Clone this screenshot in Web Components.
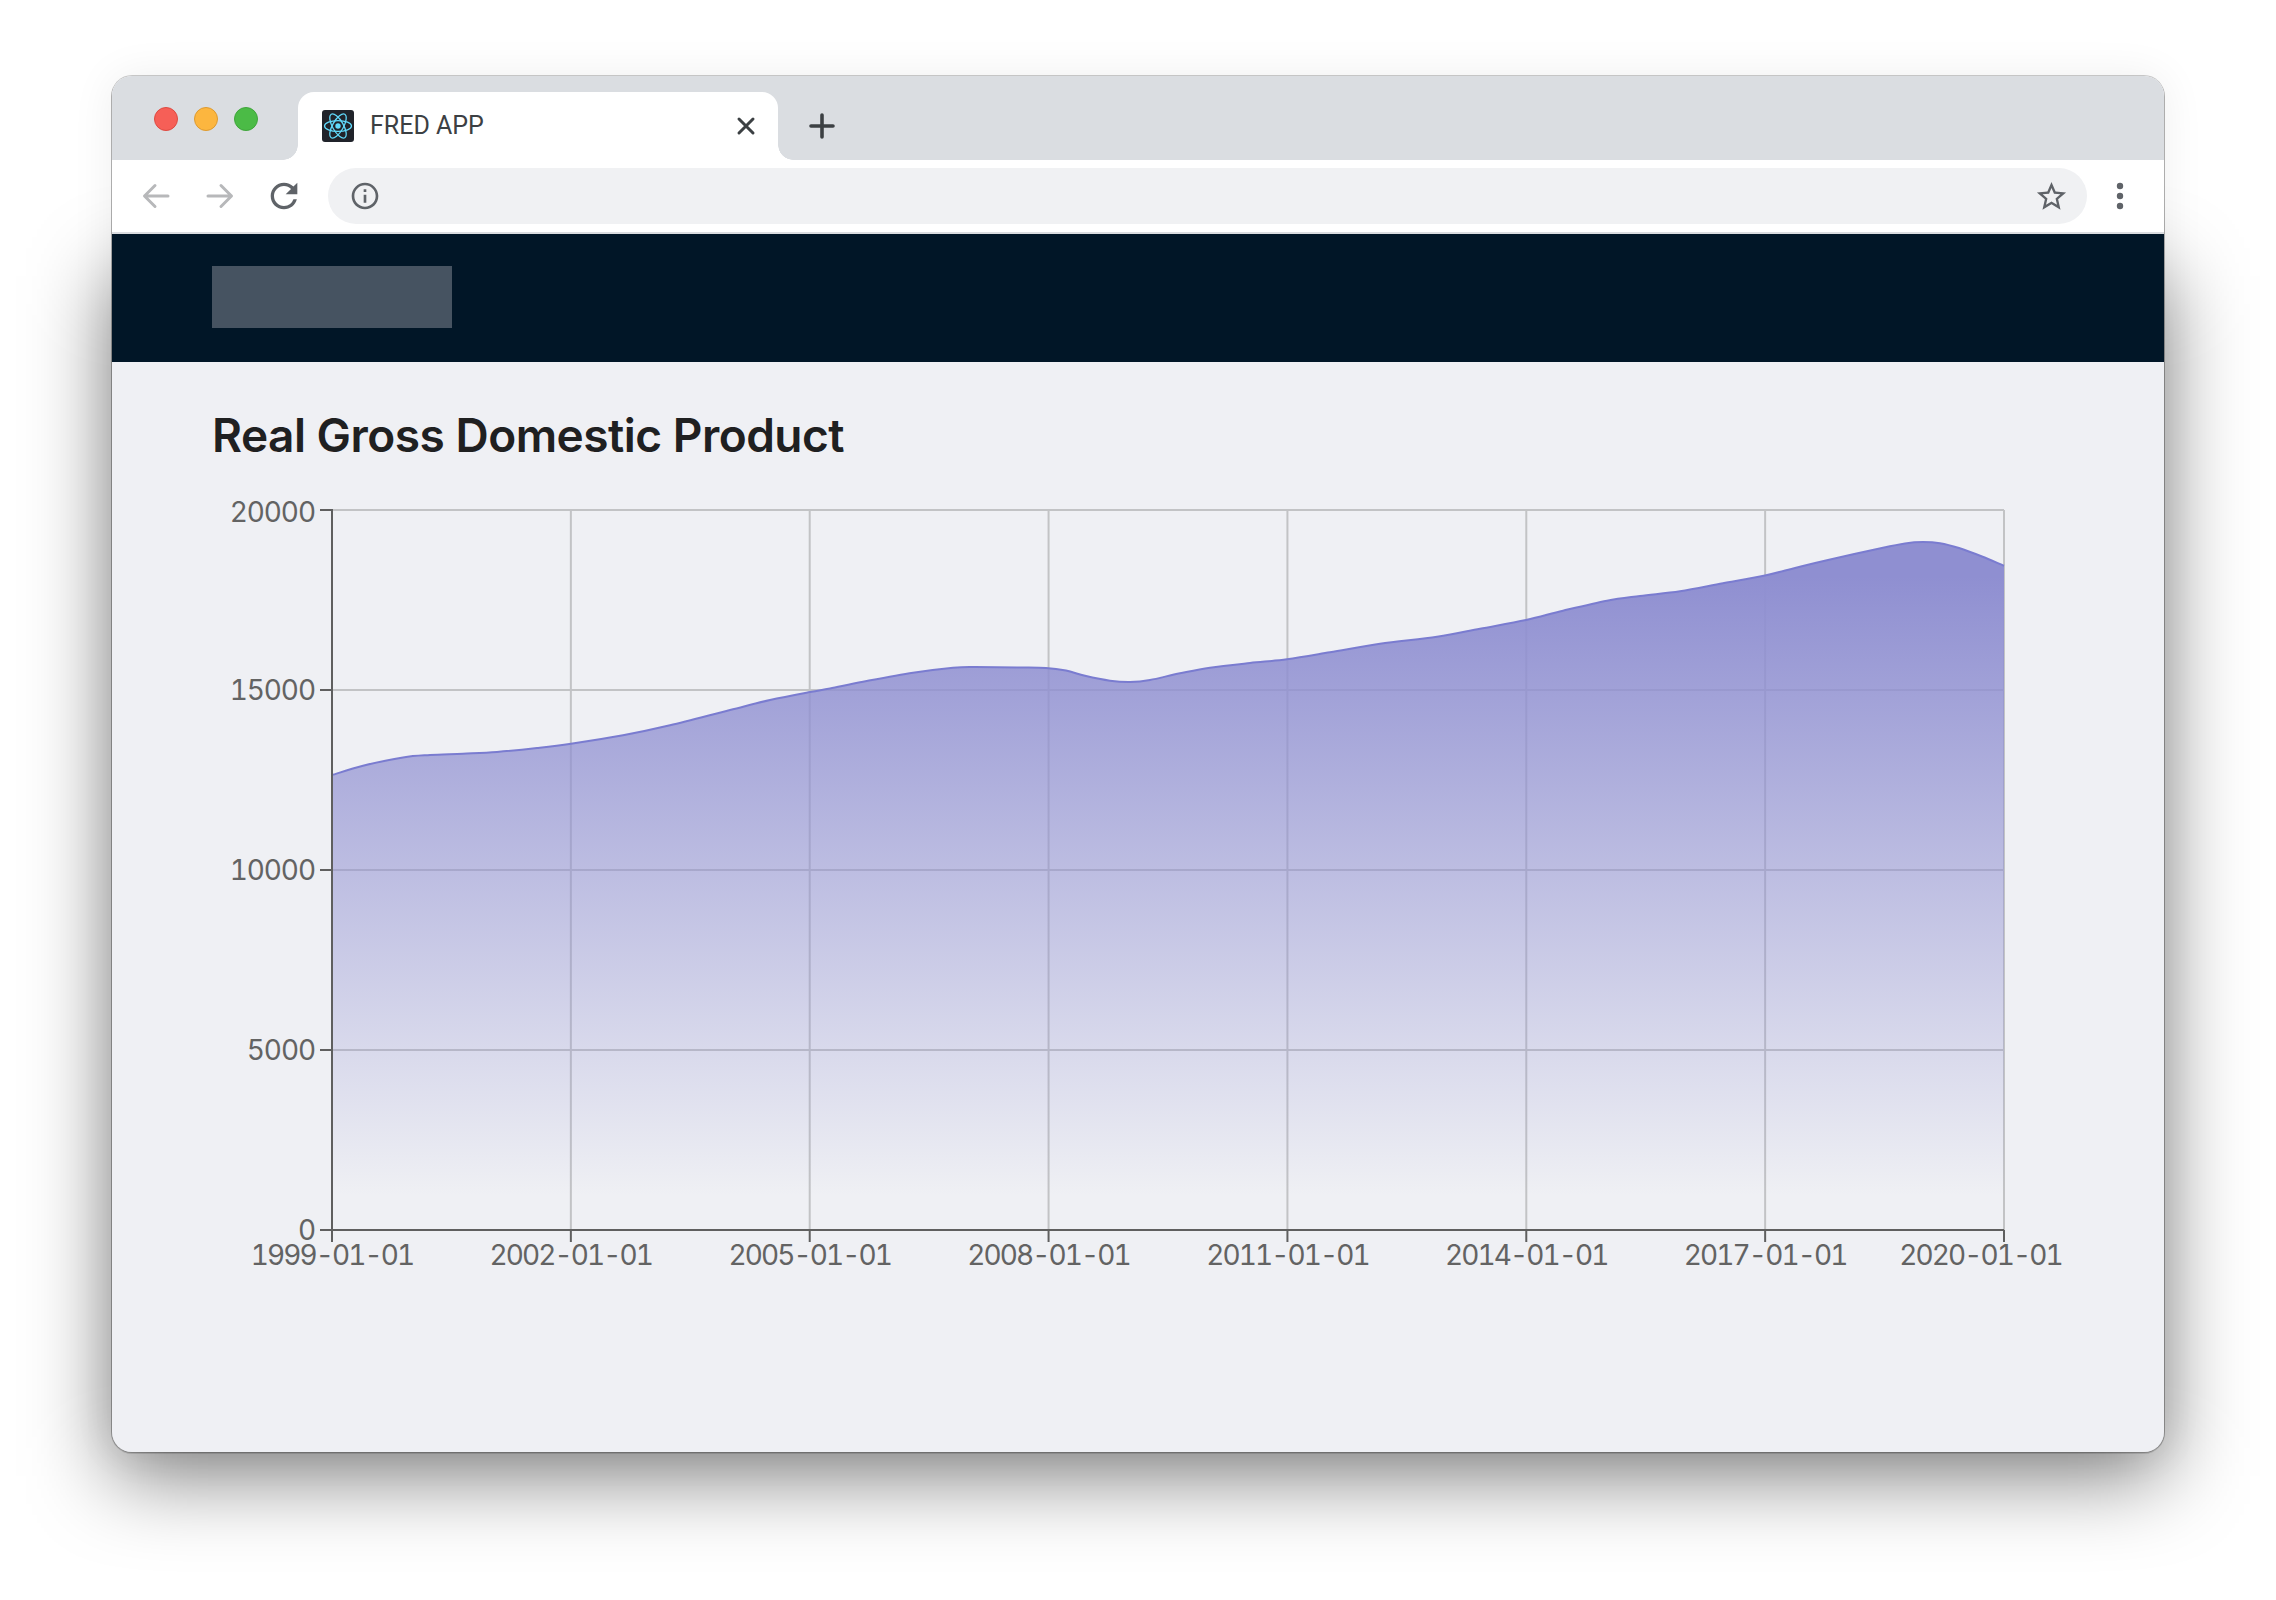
<!DOCTYPE html>
<html lang="en">
<head>
<meta charset="utf-8">
<title>FRED APP</title>
<style>
    html, body {
        margin: 0;
        background: #fff;
    }
</style>
</head>
<body>
<browser-window>
    <browser-tab slot="tab" title-text="FRED APP"></browser-tab>
    <browser-toolbar slot="toolbar"></browser-toolbar>
    <app-header></app-header>
    <chart-section heading="Real Gross Domestic Product">
        <gdp-chart></gdp-chart>
    </chart-section>
</browser-window>

<script>
class BrowserWindow extends HTMLElement {
    constructor() {
        super();
        this.attachShadow({ mode: 'open' });
        this.shadowRoot.innerHTML = `
            <style>
                :host {
                    display: block;
                    position: relative;
                    box-sizing: border-box;
                    width: 2052px;
                    height: 1376px;
                    margin: 76px 0 148px 112px;
                    border-radius: 20px;
                    background: #eff0f4;
                    box-shadow: 0 0 0 1px rgba(0, 0, 0, 0.2), 0 1px 0 1px rgba(0, 0, 0, 0.12), 0 0 44px rgba(0, 0, 0, 0.07);
                }
                /* the drop shadow starts well below the top of the window */
                .drop {
                    position: absolute;
                    inset: 200px 0 -24px 0;
                    background: rgba(0, 0, 0, 0.5);
                    filter: blur(42px);
                }
                .frame {
                    position: relative;
                    display: flex;
                    flex-direction: column;
                    height: 100%;
                    border-radius: 20px;
                    background: #eff0f4;
                    overflow: hidden;
                }
                .strip {
                    display: flex;
                    align-items: flex-start;
                    flex: none;
                    height: 84px;
                    background: #dadde1;
                }
                .lights {
                    display: flex;
                    gap: 16px;
                    width: 144px;
                    padding: 31px 0 0 42px;
                }
                .lights span {
                    box-sizing: border-box;
                    width: 24px;
                    height: 24px;
                    border-radius: 50%;
                    border: 1px solid;
                }
                .red { background: #f65f57; border-color: #de4a41 !important; }
                .yellow { background: #fcb63f; border-color: #dd9a30 !important; }
                .green { background: #4bbb46; border-color: #3fa53b !important; }
                .new-tab {
                    width: 28px;
                    height: 28px;
                    margin: 36px 0 0 30px;
                }
                .page {
                    display: flex;
                    flex-direction: column;
                    flex: 1;
                    min-height: 0;
                }
            </style>
            <div class="drop"></div>
            <div class="frame">
                <div class="strip">
                    <div class="lights">
                        <span class="red"></span>
                        <span class="yellow"></span>
                        <span class="green"></span>
                    </div>
                    <slot name="tab"></slot>
                    <svg class="new-tab" viewBox="0 0 28 28" fill="none" stroke="#3c4043" stroke-width="3.6" stroke-linecap="round">
                        <path d="M14 3V25M3 14H25"/>
                    </svg>
                </div>
                <slot name="toolbar"></slot>
                <div class="page"><slot></slot></div>
            </div>
        `;
    }
}

class BrowserTab extends HTMLElement {
    constructor() {
        super();
        this.attachShadow({ mode: 'open' });
    }

    connectedCallback() {
        const title = this.getAttribute('title-text');
        this.shadowRoot.innerHTML = `
            <style>
                :host {
                    display: block;
                    position: relative;
                    box-sizing: border-box;
                    width: 480px;
                    height: 68px;
                    margin-top: 16px;
                    background: #fff;
                    border-radius: 16px 16px 0 0;
                }
                :host::before, :host::after {
                    content: '';
                    position: absolute;
                    bottom: 0;
                    width: 15px;
                    height: 15px;
                }
                :host::before {
                    left: -15px;
                    background: radial-gradient(circle at 0 0, transparent 14.5px, #fff 15px);
                }
                :host::after {
                    right: -15px;
                    background: radial-gradient(circle at 100% 0, transparent 14.5px, #fff 15px);
                }
                .row {
                    display: flex;
                    align-items: center;
                    gap: 16px;
                    height: 100%;
                    padding: 0 22px 0 24px;
                }
                .favicon {
                    flex: none;
                    width: 32px;
                    height: 32px;
                    margin-top: -1px;
                }
                .title {
                    flex: 1;
                    font: 400 25px/32px "Roboto", "Liberation Sans", sans-serif;
                    color: #3c4043;
                    white-space: nowrap;
                }
                .close {
                    flex: none;
                    width: 20px;
                    height: 20px;
                }
            </style>
            <div class="row">
                <svg class="favicon" viewBox="0 0 32 32">
                    <rect width="32" height="32" rx="3" fill="#20232a"/>
                    <g fill="none" stroke="#61dafb" stroke-width="1.3">
                        <ellipse cx="16" cy="16" rx="13.5" ry="5.4"/>
                        <ellipse cx="16" cy="16" rx="13.5" ry="5.4" transform="rotate(60 16 16)"/>
                        <ellipse cx="16" cy="16" rx="13.5" ry="5.4" transform="rotate(120 16 16)"/>
                    </g>
                    <circle cx="16" cy="16" r="2.7" fill="#61dafb"/>
                </svg>
                <span class="title">${title}</span>
                <svg class="close" viewBox="0 0 20 20" fill="none" stroke="#3c4043" stroke-width="3" stroke-linecap="round">
                    <path d="M3 3L17 17M17 3L3 17"/>
                </svg>
            </div>
        `;
    }
}

class BrowserToolbar extends HTMLElement {
    constructor() {
        super();
        this.attachShadow({ mode: 'open' });
        this.shadowRoot.innerHTML = `
            <style>
                :host {
                    display: flex;
                    flex: none;
                    align-items: center;
                    box-sizing: border-box;
                    height: 74px;
                    padding: 0 22px;
                    background: #fff;
                    border-bottom: 2px solid #dadce0;
                }
                .btn {
                    display: flex;
                    flex: none;
                    align-items: center;
                    justify-content: center;
                    width: 44px;
                    height: 44px;
                    margin-right: 20px;
                }
                .btn.reload { margin-right: 22px; }
                .btn.menu { margin: 0 0 0 11px; }
                .omnibox {
                    display: flex;
                    flex: 1;
                    align-items: center;
                    justify-content: space-between;
                    height: 56px;
                    padding: 0 18px 0 21px;
                    border-radius: 28px;
                    background: #f0f1f3;
                }
            </style>
            <div class="btn">
                <svg width="30" height="28" viewBox="0 0 30 28" fill="none" stroke="#b7b8ba" stroke-width="3" stroke-linecap="round" stroke-linejoin="round">
                    <path d="M27 14H4M14 3.5L3.5 14L14 24.5"/>
                </svg>
            </div>
            <div class="btn">
                <svg width="30" height="28" viewBox="0 0 30 28" fill="none" stroke="#b7b8ba" stroke-width="3" stroke-linecap="round" stroke-linejoin="round">
                    <path d="M3 14H26M16 3.5L26.500 14L16 24.5"/>
                </svg>
            </div>
            <div class="btn reload">
                <svg width="40" height="40" viewBox="0 0 24 24" fill="#5f6368">
                    <path d="M17.65 6.35A7.958 7.958 0 0 0 12 4c-4.42 0-7.99 3.58-7.99 8s3.57 8 7.99 8c3.73 0 6.84-2.55 7.73-6h-2.08A5.99 5.99 0 0 1 12 18c-3.31 0-6-2.69-6-6s2.69-6 6-6c1.66 0 3.14.69 4.22 1.78L13 11h7V4l-2.35 2.35z"/>
                </svg>
            </div>
            <div class="omnibox">
                <svg width="32" height="32" viewBox="0 0 24 24" fill="#5f6368">
                    <path d="M11 7h2v2h-2zm0 4h2v6h-2zm1-9C6.48 2 2 6.48 2 12s4.48 10 10 10 10-4.48 10-10S17.52 2 12 2zm0 18c-4.41 0-8-3.59-8-8s3.59-8 8-8 8 3.59 8 8-3.59 8-8 8z"/>
                </svg>
                <svg width="35" height="35" viewBox="0 0 24 24" fill="#5f6368">
                    <path d="M22 9.24l-7.19-.62L12 2 9.19 8.63 2 9.24l5.46 4.73L5.82 21 12 17.27 18.18 21l-1.63-7.03L22 9.24zM12 15.4l-3.76 2.27 1-4.28-3.32-2.88 4.38-.38L12 6.1l1.71 4.04 4.38.38-3.32 2.88 1 4.28L12 15.4z"/>
                </svg>
            </div>
            <div class="btn menu">
                <svg width="8" height="28" viewBox="0 0 8 28" fill="#5f6368">
                    <circle cx="4" cy="4" r="3.2"/>
                    <circle cx="4" cy="14" r="3.2"/>
                    <circle cx="4" cy="24" r="3.2"/>
                </svg>
            </div>
        `;
    }
}

class AppHeader extends HTMLElement {
    constructor() {
        super();
        this.attachShadow({ mode: 'open' });
        this.shadowRoot.innerHTML = `
            <style>
                :host {
                    display: block;
                    flex: none;
                    box-sizing: border-box;
                    height: 128px;
                    padding: 32px 100px 0;
                    background: #011627;
                }
                .logo {
                    width: 240px;
                    height: 62px;
                    background: #465361;
                }
            </style>
            <div class="logo"></div>
        `;
    }
}

class ChartSection extends HTMLElement {
    constructor() {
        super();
        this.attachShadow({ mode: 'open' });
    }

    connectedCallback() {
        this.shadowRoot.innerHTML = `
            <style>
                :host {
                    display: block;
                    padding: 45px 0 0 100px;
                }
                h1 {
                    margin: 0 0 27px;
                    font: 600 46px/56px "Inter", "Liberation Sans", sans-serif;
                    letter-spacing: -0.5px;
                    color: #1f2021;
                }
            </style>
            <h1>${this.getAttribute('heading')}</h1>
            <slot></slot>
        `;
    }
}

class GdpChart extends HTMLElement {
    constructor() {
        super();
        this.attachShadow({ mode: 'open' });

        this.left = 332;
        this.right = 2004;
        this.top = 510;
        this.bottom = 1230;

        // traced from the reference, in page pixels
        this.curve = [
            [332, 775], [363, 765.7], [403, 757.4], [430, 755], [463, 753.7], [497, 752],
            [537, 748], [571, 743.7], [623, 735.3], [670, 725.3], [730, 710], [770, 700],
            [810, 692], [830, 688.5], [863, 681.7], [913, 672.7], [953, 667.7], [975, 667],
            [1017, 667.5], [1046, 668], [1066, 670.6], [1085, 675.8], [1110, 680.7], [1130, 682],
            [1150, 680], [1180, 673.3], [1210, 667.7], [1250, 663], [1287, 659.3], [1330, 652.3],
            [1380, 643.7], [1437, 636.7], [1480, 628.7], [1526, 620], [1563, 610.7], [1607, 600.7],
            [1640, 596], [1680, 591.3], [1723, 583.3], [1765, 575.5], [1796, 567.7], [1828, 560],
            [1883, 547.7], [1905, 543.4], [1923, 542], [1940, 543.2], [1959, 548], [1982, 556.5],
            [2004, 565.7]
        ];

        this.render();
    }

    smoothPath(points) {
        let d = `M${points[0][0]},${points[0][1]}`;
        for (let i = 0; i < points.length - 1; i++) {
            const p0 = points[Math.max(i - 1, 0)];
            const p1 = points[i];
            const p2 = points[i + 1];
            const p3 = points[Math.min(i + 2, points.length - 1)];
            const c1x = p1[0] + (p2[0] - p0[0]) / 6;
            const c1y = p1[1] + (p2[1] - p0[1]) / 6;
            const c2x = p2[0] - (p3[0] - p1[0]) / 6;
            const c2y = p2[1] - (p3[1] - p1[1]) / 6;
            d += `C${c1x.toFixed(1)},${c1y.toFixed(1)} ${c2x.toFixed(1)},${c2y.toFixed(1)} ${p2[0]},${p2[1]}`;
        }
        return d;
    }

    render() {
        const { left, right, top, bottom } = this;
        const line = this.smoothPath(this.curve);

        const yTicks = [
            { label: '20000', y: 510, base: 522.4 },
            { label: '15000', y: 690, base: 700.4 },
            { label: '10000', y: 870, base: 880.4 },
            { label: '5000', y: 1050, base: 1060.4 },
            { label: '0', y: 1230, base: 1240.4 }
        ];

        const step = (right - left) / 7;
        const xTicks = ['1999', '2002', '2005', '2008', '2011', '2014', '2017', '2020'].map((year, i) => {
            const x = left + step * i;
            return { label: `${year}-01-01`, x, textX: i === 7 ? 1980.5 : x };
        });

        this.shadowRoot.innerHTML = `
            <style>
                :host {
                    display: block;
                    width: 1900px;
                    height: 800px;
                }
                svg {
                    display: block;
                }
                text {
                    font: 400 28px "Inter", "Liberation Sans", sans-serif;
                    font-variant-numeric: tabular-nums;
                    fill: #636363;
                }
                .y-label { letter-spacing: -1.1px; }
                .x-label { letter-spacing: -1.9px; }
            </style>
            <svg width="1900" height="800" viewBox="212 490 1900 800">
                <defs>
                    <linearGradient id="area" x1="0" y1="0" x2="0" y2="1">
                        <stop offset="5%" stop-color="#8f8fd1" stop-opacity="1"/>
                        <stop offset="95%" stop-color="#8f8fd1" stop-opacity="0"/>
                    </linearGradient>
                </defs>
                <g stroke="#c2c3c5" stroke-width="2" fill="none">
                    ${yTicks.map(t => `<path d="M${left} ${t.y}H${right}"/>`).join('')}
                    ${xTicks.map(t => `<path d="M${t.x} ${top}V${bottom}"/>`).join('')}
                </g>
                <path d="${line}L${right},${bottom}L${left},${bottom}Z" fill="url(#area)"/>
                <path d="${line}" fill="none" stroke="#7a7cd0" stroke-width="2"/>
                <g stroke="#5f5f5f" stroke-width="2" fill="none">
                    <path d="M${left} ${top - 1}V${bottom}H${right}"/>
                    ${yTicks.map(t => `<path d="M${left - 12} ${t.y}H${left}"/>`).join('')}
                    ${xTicks.map(t => `<path d="M${t.x} ${bottom}V${bottom + 12}"/>`).join('')}
                </g>
                ${yTicks.map(t => `<text class="y-label" x="315" y="${t.base}" text-anchor="end">${t.label}</text>`).join('')}
                ${xTicks.map(t => `<text class="x-label" x="${t.textX}" y="1265.4" text-anchor="middle">${t.label}</text>`).join('')}
            </svg>
        `;
    }
}

customElements.define('browser-window', BrowserWindow);
customElements.define('browser-tab', BrowserTab);
customElements.define('browser-toolbar', BrowserToolbar);
customElements.define('app-header', AppHeader);
customElements.define('chart-section', ChartSection);
customElements.define('gdp-chart', GdpChart);
</script>
</body>
</html>
